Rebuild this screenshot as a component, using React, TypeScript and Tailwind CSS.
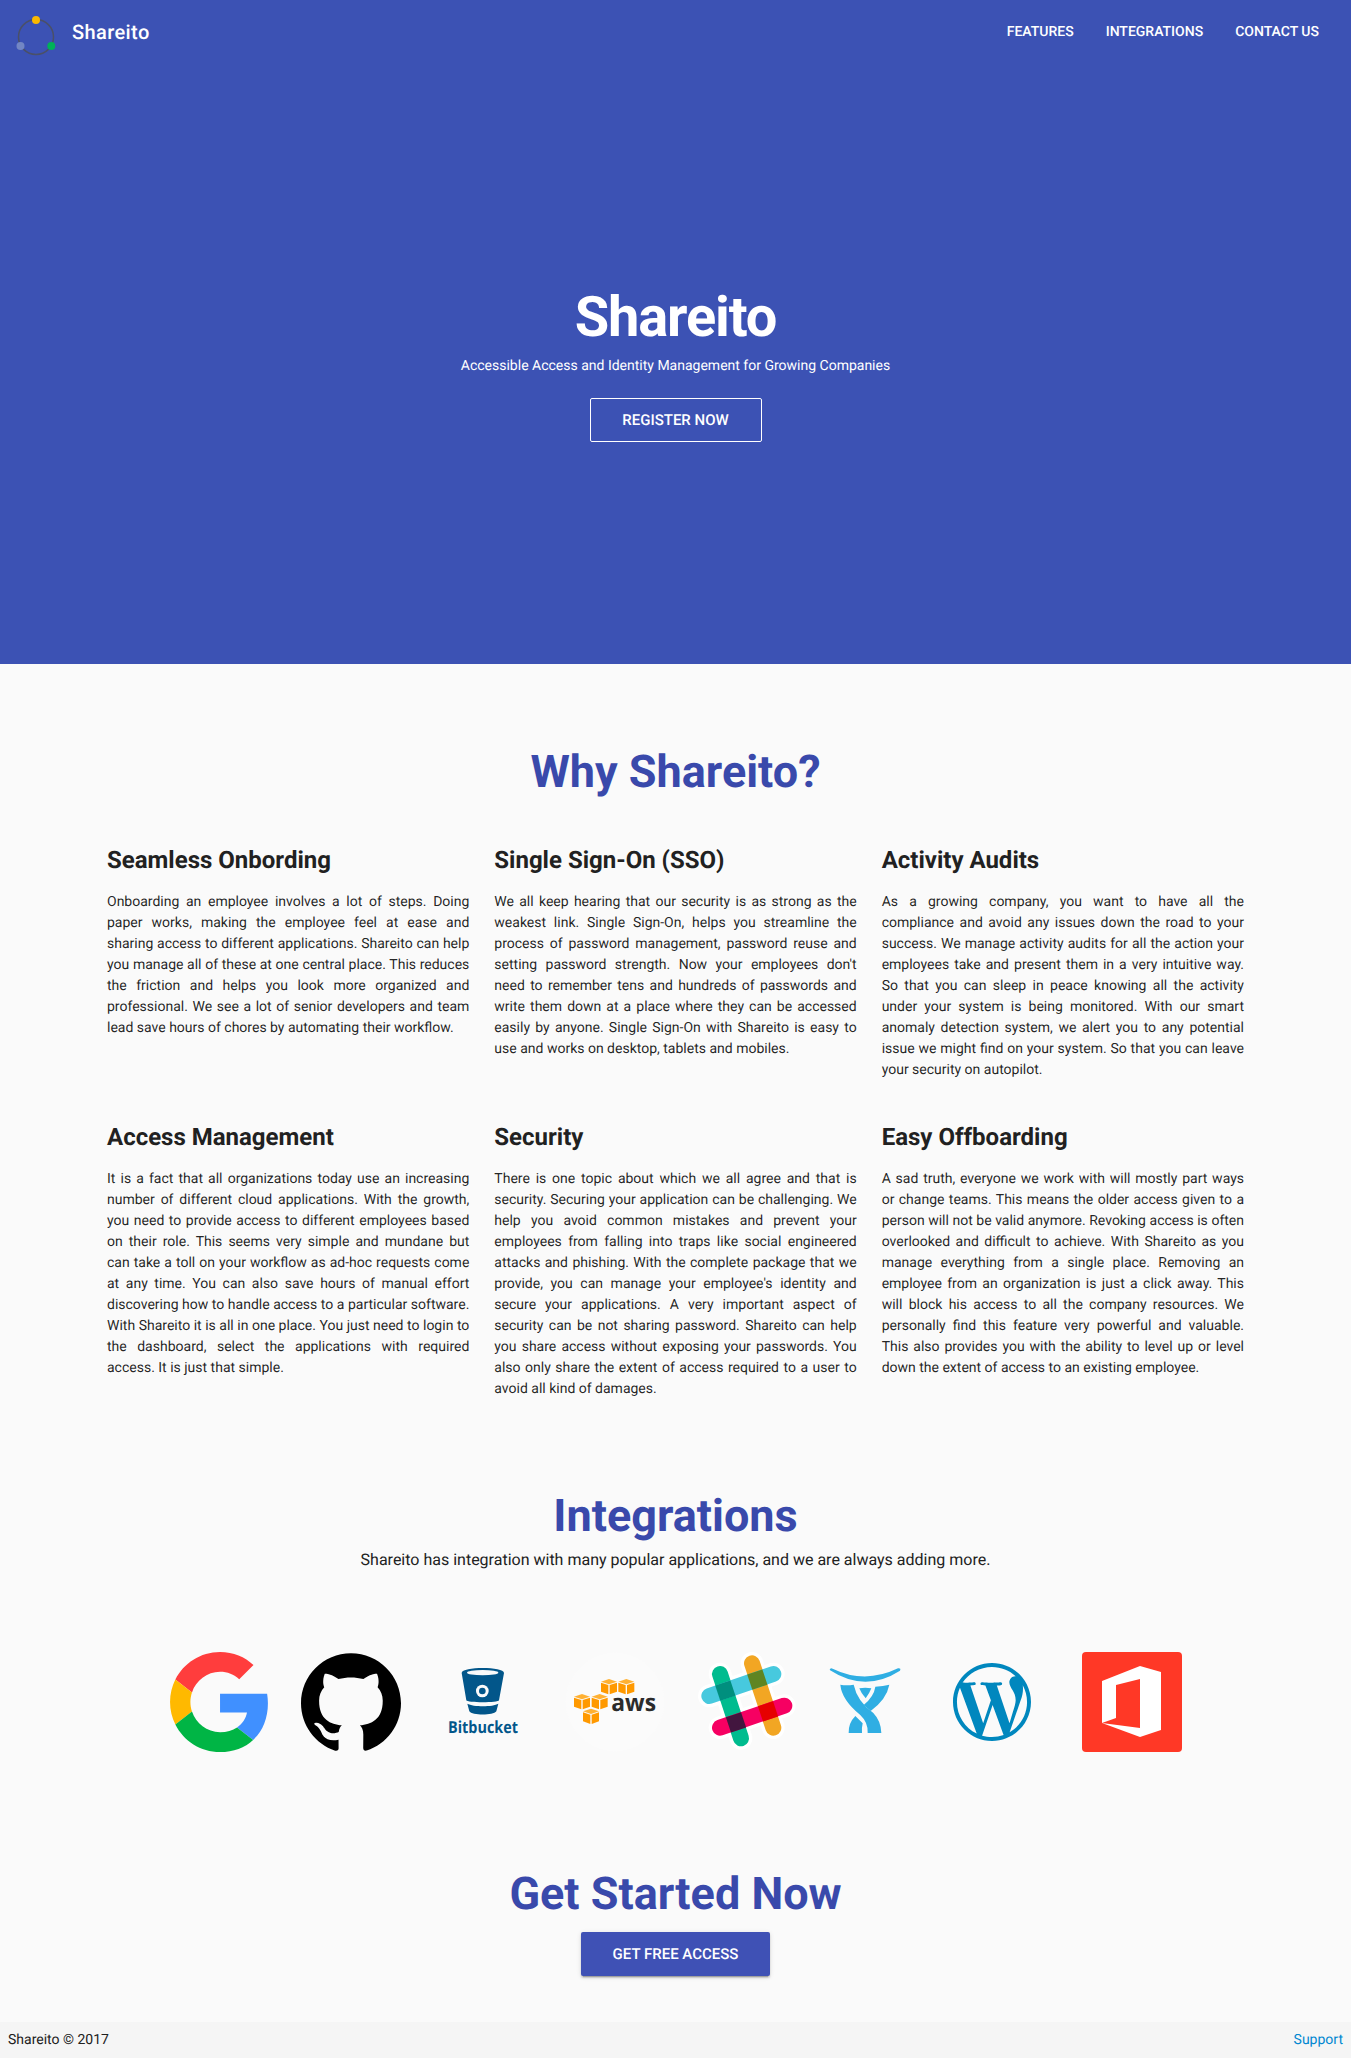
import { SiGithub, SiWordpress } from "react-icons/si";

const features = [
  {
    title: "Seamless Onbording",
    body: "Onboarding an employee involves a lot of steps. Doing paper works, making the employee feel at ease and sharing access to different applications. Shareito can help you manage all of these at one central place. This reduces the friction and helps you look more organized and professional. We see a lot of senior developers and team lead save hours of chores by automating their workflow.",
  },
  {
    title: "Single Sign-On (SSO)",
    body: "We all keep hearing that our security is as strong as the weakest link. Single Sign-On, helps you streamline the process of password management, password reuse and setting password strength. Now your employees don't need to remember tens and hundreds of passwords and write them down at a place where they can be accessed easily by anyone. Single Sign-On with Shareito is easy to use and works on desktop, tablets and mobiles.",
  },
  {
    title: "Activity Audits",
    body: "As a growing company, you want to have all the compliance and avoid any issues down the road to your success. We manage activity audits for all the action your employees take and present them in a very intuitive way. So that you can sleep in peace knowing all the activity under your system is being monitored. With our smart anomaly detection system, we alert you to any potential issue we might find on your system. So that you can leave your security on autopilot.",
  },
  {
    title: "Access Management",
    body: "It is a fact that all organizations today use an increasing number of different cloud applications. With the growth, you need to provide access to different employees based on their role. This seems very simple and mundane but can take a toll on your workflow as ad-hoc requests come at any time. You can also save hours of manual effort discovering how to handle access to a particular software. With Shareito it is all in one place. You just need to login to the dashboard, select the applications with required access. It is just that simple.",
  },
  {
    title: "Security",
    body: "There is one topic about which we all agree and that is security. Securing your application can be challenging. We help you avoid common mistakes and prevent your employees from falling into traps like social engineered attacks and phishing. With the complete package that we provide, you can manage your employee's identity and secure your applications. A very important aspect of security can be not sharing password. Shareito can help you share access without exposing your passwords. You also only share the extent of access required to a user to avoid all kind of damages.",
  },
  {
    title: "Easy Offboarding",
    body: "A sad truth, everyone we work with will mostly part ways or change teams. This means the older access given to a person will not be valid anymore. Revoking access is often overlooked and difficult to achieve. With Shareito as you manage everything from a single place. Removing an employee from an organization is just a click away. This will block his access to all the company resources. We personally find this feature very powerful and valuable. This also provides you with the ability to level up or level down the extent of access to an existing employee.",
  },
];

function BrandMark() {
  return (
    <svg viewBox="0 0 56 56" className="h-14 w-14 shrink-0">
      <circle cx="36" cy="33" r="17.5" fill="none" stroke="#4a5068" strokeWidth="1.5" />
      <circle cx="36" cy="16" r="4" fill="#fbb900" />
      <circle cx="51.3" cy="42" r="4" fill="#00b159" />
      <circle cx="20.5" cy="42" r="4" fill="#7286c4" />
    </svg>
  );
}

function GoogleLogo() {
  return (
    <svg viewBox="0 0 47 48" className="h-[100px] w-[100px] shrink-0">
      <path fill="#ff3d3d" d="M24 9.5c3.54 0 6.71 1.22 9.21 3.6l6.85-6.85C35.9 2.38 30.47 0 24 0 14.62 0 6.51 5.38 2.56 13.22l7.98 6.19C12.43 13.72 17.74 9.5 24 9.5z" />
      <path fill="#4090ff" d="M46.98 24.55c0-1.57-.15-3.09-.38-4.55H24v9.02h12.94c-.58 2.96-2.26 5.48-4.78 7.18l7.73 6c4.51-4.18 7.09-10.36 7.09-17.65z" />
      <path fill="#ffb900" d="M10.53 28.59c-.48-1.45-.76-2.99-.76-4.59s.27-3.14.76-4.59l-7.98-6.19C.92 16.46 0 20.12 0 24c0 3.88.92 7.54 2.56 10.78l7.97-6.19z" />
      <path fill="#00b545" d="M24 48c6.48 0 11.93-2.13 15.89-5.81l-7.73-6c-2.15 1.45-4.92 2.3-8.16 2.3-6.26 0-11.57-4.22-13.47-9.91l-7.98 6.19C6.51 42.62 14.62 48 24 48z" />
    </svg>
  );
}

function BitbucketLogo() {
  return (
    <svg viewBox="879 99 300 300" className="h-[100px] w-[100px] shrink-0">
      <path
        fill="#02568a"
        d="M965 162 C965 142 1092 142 1092 162 L1077 244 C1076 252 980 252 979 244 Z M982 254 C1000 264 1058 264 1075 254 L1069 277 C1060 290 996 290 988 277 Z"
      />
      <ellipse cx="1028" cy="161" rx="47" ry="8" fill="#fafafa" />
      <circle cx="1027" cy="216" r="19" fill="#fafafa" />
      <circle cx="1027" cy="216" r="10" fill="#02568a" />
      <text
        x="924"
        y="341"
        fontFamily="'Open Sans', sans-serif"
        fontWeight="700"
        fontSize="50"
        textLength="210"
        lengthAdjust="spacingAndGlyphs"
        fill="#02568a"
      >
        Bitbucket
      </text>
    </svg>
  );
}

function AwsCube({ x, y }: { x: number; y: number }) {
  return (
    <g transform={`translate(${x} ${y})`}>
      <polygon points="24,0 48,8 24,16 0,8" fill="#ffb133" />
      <polygon points="0,11 22,18 22,46 0,38" fill="#ff9900" />
      <polygon points="26,18 48,11 48,38 26,46" fill="#ff9900" />
    </g>
  );
}

function AwsLogo() {
  return (
    <svg viewBox="75 99 300 300" className="h-[100px] w-[100px] shrink-0">
      <circle cx="225" cy="249" r="148" fill="#fbfbfb" />
      <AwsCube x={183} y={180} />
      <AwsCube x={235} y={180} />
      <AwsCube x={102} y={225} />
      <AwsCube x={155} y={225} />
      <AwsCube x={129} y={269} />
      <text
        x="214"
        y="275"
        fontFamily="'Open Sans', sans-serif"
        fontWeight="700"
        fontSize="72"
        textLength="134"
        lengthAdjust="spacingAndGlyphs"
        fill="#2b2b2b"
      >
        aws
      </text>
    </svg>
  );
}

function SlackLogo() {
  return (
    <svg viewBox="471 99 300 300" className="h-[100px] w-[100px] shrink-0">
      <g fill="none" stroke="#ffffff" strokeWidth="68" strokeLinecap="round">
        <path d="M540 165 L603 358" />
        <path d="M636 133 L700 326" />
        <path d="M508 231 L700 165" />
        <path d="M540 326 L733 260" />
      </g>
      <g fill="none" strokeWidth="48" strokeLinecap="round">
        <path d="M540 165 L603 358" stroke="#00bc8f" />
        <path d="M636 133 L700 326" stroke="#f2a623" />
        <path d="M508 231 L700 165" stroke="#47c9de" />
        <path d="M540 326 L733 260" stroke="#f60062" />
      </g>
      <rect x="-24" y="-24" width="48" height="48" transform="translate(556 215) rotate(-18.5)" fill="#008f7e" />
      <rect x="-24" y="-24" width="48" height="48" transform="translate(652 182) rotate(-18.5)" fill="#5f8522" />
      <rect x="-24" y="-24" width="48" height="48" transform="translate(588 310) rotate(-18.5)" fill="#42163f" />
      <rect x="-24" y="-24" width="48" height="48" transform="translate(684 277) rotate(-18.5)" fill="#e60000" />
    </svg>
  );
}

function AtlassianLogo() {
  return (
    <svg viewBox="867 99 219 300" className="h-[100px] w-[73px] shrink-0" fill="#2faee3">
      <path d="M869 153 Q870 146 878 149 Q975 196 1074 148 Q1084 147 1080 155 Q975 222 869 153 Z" />
      <path d="M901 197 Q920 201 941 197 Q952 248 1000 282 Q1023 306 1024 342 L983 342 Q985 310 960 287 Q905 242 901 197 Z" />
      <path d="M1048 197 Q1030 201 1006 203 Q1002 232 971 258 L992 276 Q1040 240 1048 197 Z" />
      <path d="M946 291 L968 313 Q965 325 966 342 L926 342 Q925 312 946 291 Z" />
      <path d="M958 208 Q975 205 994 208 Q988 224 977 238 Q964 224 958 208 Z" />
    </svg>
  );
}

function OfficeLogo() {
  return (
    <div className="h-[100px] w-[100px] shrink-0 rounded bg-[#ff3826]">
      <svg viewBox="0 0 100 100" className="h-full w-full">
        <path
          fill="#ffffff"
          fillRule="evenodd"
          d="M20 29 L58 14 L79 20 L79 78 L58 85 L20 71 Z M34 33 L58 27 L58 76 L20 71 L34 66 Z"
        />
      </svg>
    </div>
  );
}

export default function App() {
  return (
    <div className="min-h-[2058px] bg-[#fafafa] font-['Roboto',sans-serif] text-[14px] leading-[21px] text-[#212121] [text-rendering:geometricPrecision]">
      <section className="h-[664px] bg-[#3c52b4] text-white">
        <header className="flex h-16 items-center justify-between pr-8">
          <div className="flex items-center gap-4">
            <BrandMark />
            <span className="text-[20px] font-medium tracking-[0.02em]">Shareito</span>
          </div>
          <nav className="flex gap-8 text-[14px] font-medium uppercase">
            <a>Features</a>
            <a>Integrations</a>
            <a>Contact us</a>
          </nav>
        </header>
        <div className="flex flex-col items-center pt-[217px]">
          <h1 className="text-[56px] leading-[72px] font-bold tracking-[-0.02em]">Shareito</h1>
          <p className="mt-[1px] text-[14px] leading-[24px]">
            Accessible Access and Identity Management for Growing Companies
          </p>
          <a className="mt-[20px] flex h-11 w-[172px] items-center justify-center rounded-[2px] border border-white text-[15px] font-medium uppercase">
            Register now
          </a>
        </div>
      </section>

      <section className="pt-[72px]">
        <h2 className="text-center text-[45px] leading-[72px] font-bold text-[#3949ab]">Why Shareito?</h2>
        <div className="mx-auto mt-[36px] grid w-[1137px] grid-cols-3 gap-x-[25px] gap-y-[40px]">
          {features.map((f) => (
            <article key={f.title}>
              <h3 className="text-[24px] leading-[32px] font-bold">{f.title}</h3>
              <p className="mt-[16px] text-justify text-[14px] leading-[21px] text-black/87">{f.body}</p>
            </article>
          ))}
        </div>
      </section>

      <section className="pt-[88px] text-center">
        <h2 className="text-[45px] leading-[56px] font-bold text-[#3949ab]">Integrations</h2>
        <p className="mt-[4px] text-[16px] leading-[24px]">
          Shareito has integration with many popular applications, and we are always adding more.
        </p>
        <div className="mt-[80px] flex items-center justify-center gap-8">
          <GoogleLogo />
          <SiGithub className="h-[100px] w-[100px] shrink-0 text-black" />
          <BitbucketLogo />
          <AwsLogo />
          <SlackLogo />
          <AtlassianLogo />
          <div className="flex w-[116px] shrink-0 justify-center">
            <SiWordpress className="h-[78px] w-[78px] text-[#0087be]" />
          </div>
          <OfficeLogo />
        </div>
      </section>

      <section className="flex flex-col items-center pt-[114px]">
        <h2 className="text-[45px] leading-[56px] font-bold text-[#3949ab]">Get Started Now</h2>
        <a className="mt-[10px] flex h-11 w-[189px] items-center justify-center rounded-[2px] bg-[#3f51b5] text-[15px] font-medium text-white uppercase shadow-[0_2px_2px_rgba(0,0,0,0.14),0_3px_1px_-2px_rgba(0,0,0,0.2),0_1px_5px_rgba(0,0,0,0.12)]">
          Get free access
        </a>
      </section>

      <footer className="mt-[46px] flex h-9 items-center justify-between bg-[#f5f5f5] px-2">
        <span>Shareito © 2017</span>
        <a className="text-[#0288d1]">Support</a>
      </footer>
    </div>
  );
}
